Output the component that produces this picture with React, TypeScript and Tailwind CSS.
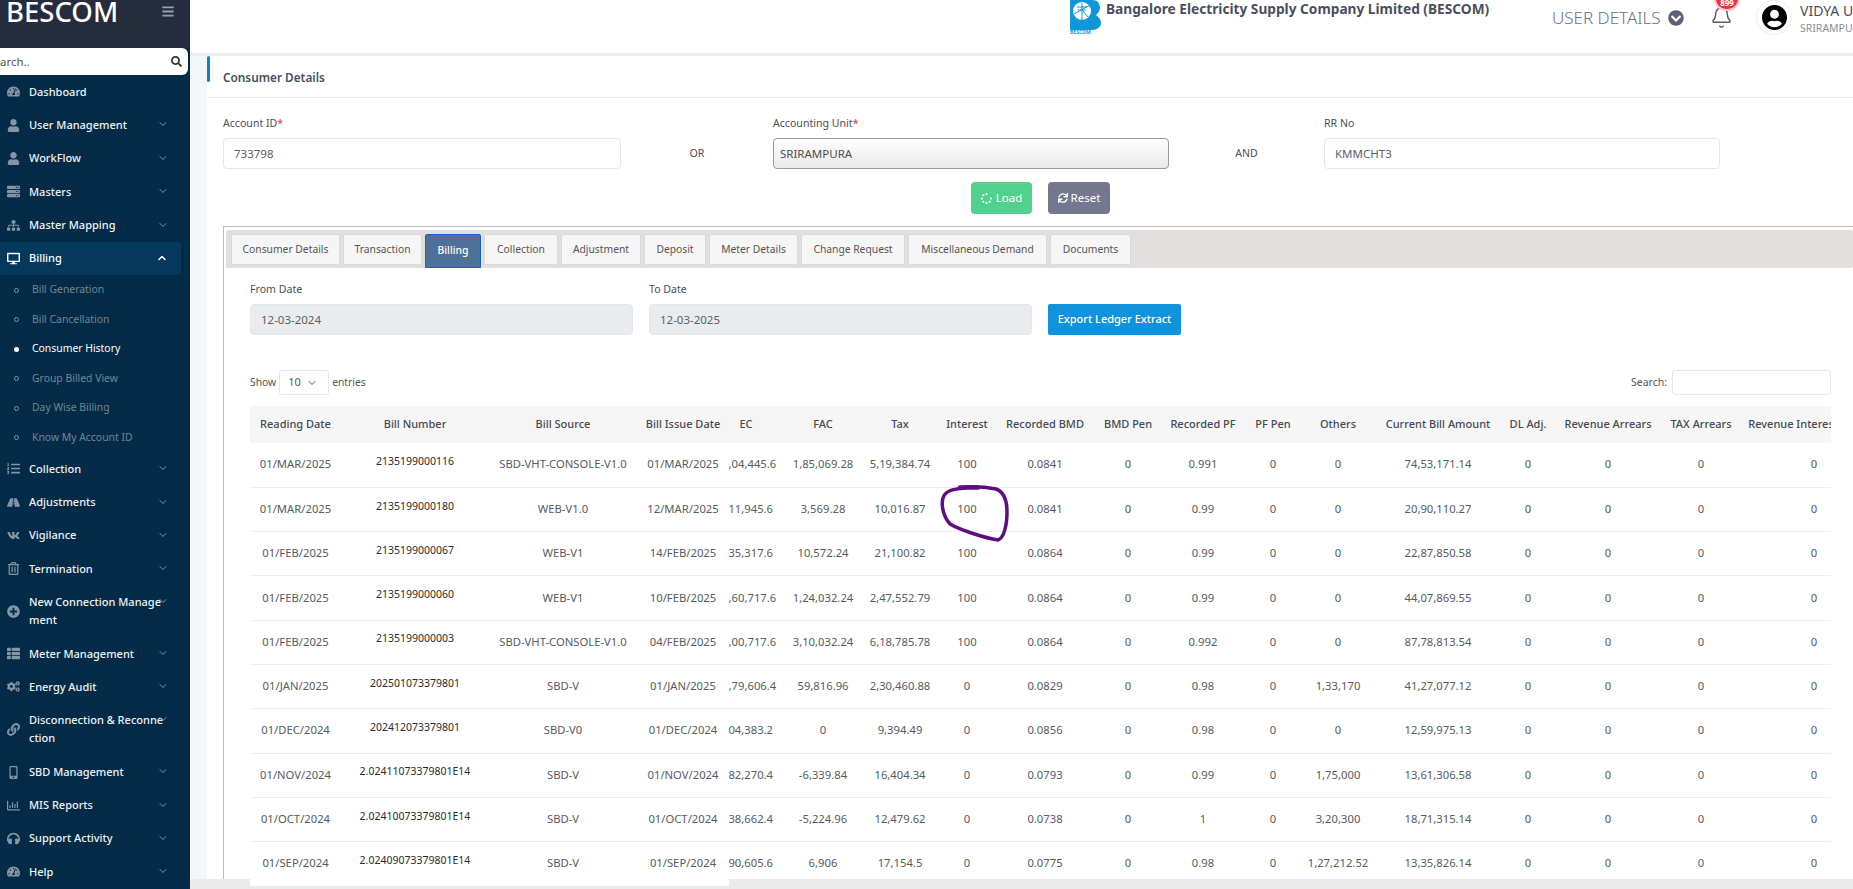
import React from "react";
import { ChevronDown, ChevronUp, Bell } from "lucide-react";
import {
  FaTachometerAlt, FaUser, FaServer, FaSitemap, FaDesktop, FaListOl, FaRoad, FaVk, FaRegTrashAlt,
  FaPlusCircle, FaThList, FaCogs, FaLink, FaMobileAlt, FaRegChartBar, FaHeadphones, FaBars, FaSearch,
  FaSpinner, FaSync, FaChevronCircleDown, FaUserCircle,
} from "react-icons/fa";

type NavItem = { lines: string[]; icon: React.ComponentType<{ className?: string }>; open?: boolean; chevron?: boolean };

const navTop: NavItem[] = [
  { lines: ["Dashboard"], icon: FaTachometerAlt, chevron: false },
  { lines: ["User Management"], icon: FaUser },
  { lines: ["WorkFlow"], icon: FaUser },
  { lines: ["Masters"], icon: FaServer },
  { lines: ["Master Mapping"], icon: FaSitemap },
];
const navBottom: NavItem[] = [
  { lines: ["Collection"], icon: FaListOl },
  { lines: ["Adjustments"], icon: FaRoad },
  { lines: ["Vigilance"], icon: FaVk },
  { lines: ["Termination"], icon: FaRegTrashAlt },
  { lines: ["New Connection Manage", "ment"], icon: FaPlusCircle },
  { lines: ["Meter Management"], icon: FaThList },
  { lines: ["Energy Audit"], icon: FaCogs },
  { lines: ["Disconnection & Reconne", "ction"], icon: FaLink },
  { lines: ["SBD Management"], icon: FaMobileAlt },
  { lines: ["MIS Reports"], icon: FaRegChartBar },
  { lines: ["Support Activity"], icon: FaHeadphones },
  { lines: ["Help"], icon: FaTachometerAlt },
];
const subItems = ["Bill Generation", "Bill Cancellation", "Consumer History", "Group Billed View", "Day Wise Billing", "Know My Account ID"];

function NavRow({ item, rowClass }: { item: NavItem; rowClass: string }) {
  const Icon = item.icon;
  const two = item.lines.length > 1;
  return (
    <div className={`relative flex items-center pl-[7px] text-white ${two ? "h-[52px]" : rowClass}`}>
      <span className="w-[22px] shrink-0"><Icon className="h-[13px] w-[13px] text-[#8496a5]" /></span>
      <span className="whitespace-nowrap text-[11px] font-medium leading-[18px] text-[#eef2f5]">
        {item.lines.map((l) => (<span key={l} className="block">{l}</span>))}
      </span>
      {item.chevron !== false && (
        <ChevronDown className="absolute left-[157px] top-[10px] h-[12px] w-[12px] text-[#8496a5]" />
      )}
    </div>
  );
}

const tabs = [
  { t: "Consumer Details", w: "w-[109px]" },
  { t: "Transaction", w: "w-[79px]" },
  { t: "Billing", w: "w-[56px]", active: true },
  { t: "Collection", w: "w-[74px]" },
  { t: "Adjustment", w: "w-[80px]" },
  { t: "Deposit", w: "w-[62px]" },
  { t: "Meter Details", w: "w-[89px]" },
  { t: "Change Request", w: "w-[104px]" },
  { t: "Miscellaneous Demand", w: "w-[139px]" },
  { t: "Documents", w: "w-[81px]" },
];

const heads = ["Reading Date", "Bill Number", "Bill Source", "Bill Issue Date", "EC", "FAC", "Tax", "Interest", "Recorded BMD", "BMD Pen", "Recorded PF", "PF Pen", "Others", "Current Bill Amount", "DL Adj.", "Revenue Arrears", "TAX Arrears", "Revenue Interest Arrears"];

const rows: string[][] = [
  ["01/MAR/2025", "2135199000116", "SBD-VHT-CONSOLE-V1.0", "01/MAR/2025", "13,04,445.6", "1,85,069.28", "5,19,384.74", "100", "0.0841", "0", "0.991", "0", "0", "74,53,171.14", "0", "0", "0", "0"],
  ["01/MAR/2025", "2135199000180", "WEB-V1.0", "12/MAR/2025", "2,11,945.6", "3,569.28", "10,016.87", "100", "0.0841", "0", "0.99", "0", "0", "20,90,110.27", "0", "0", "0", "0"],
  ["01/FEB/2025", "2135199000067", "WEB-V1", "14/FEB/2025", "2,35,317.6", "10,572.24", "21,100.82", "100", "0.0864", "0", "0.99", "0", "0", "22,87,850.58", "0", "0", "0", "0"],
  ["01/FEB/2025", "2135199000060", "WEB-V1", "10/FEB/2025", "27,60,717.6", "1,24,032.24", "2,47,552.79", "100", "0.0864", "0", "0.99", "0", "0", "44,07,869.55", "0", "0", "0", "0"],
  ["01/FEB/2025", "2135199000003", "SBD-VHT-CONSOLE-V1.0", "04/FEB/2025", "69,00,717.6", "3,10,032.24", "6,18,785.78", "100", "0.0864", "0", "0.992", "0", "0", "87,78,813.54", "0", "0", "0", "0"],
  ["01/JAN/2025", "202501073379801", "SBD-V", "01/JAN/2025", "36,79,606.4", "59,816.96", "2,30,460.88", "0", "0.0829", "0", "0.98", "0", "1,33,170", "41,27,077.12", "0", "0", "0", "0"],
  ["01/DEC/2024", "202412073379801", "SBD-V0", "01/DEC/2024", "8,04,383.2", "0", "9,394.49", "0", "0.0856", "0", "0.98", "0", "0", "12,59,975.13", "0", "0", "0", "0"],
  ["01/NOV/2024", "2.02411073379801E14", "SBD-V", "01/NOV/2024", "8,82,270.4", "-6,339.84", "16,404.34", "0", "0.0793", "0", "0.99", "0", "1,75,000", "13,61,306.58", "0", "0", "0", "0"],
  ["01/OCT/2024", "2.02410073379801E14", "SBD-V", "01/OCT/2024", "9,38,662.4", "-5,224.96", "12,479.62", "0", "0.0738", "0", "1", "0", "3,20,300", "18,71,315.14", "0", "0", "0", "0"],
  ["01/SEP/2024", "2.02409073379801E14", "SBD-V", "01/SEP/2024", "8,90,605.6", "6,906", "17,154.5", "0", "0.0775", "0", "0.98", "0", "1,27,212.52", "13,35,826.14", "0", "0", "0", "0"],
];

const cols = ["w-[91px]", "w-[148px]", "w-[148px]", "w-[92px]", "w-[59px]", "w-[70px]", "w-[84px]", "w-[50px]", "w-[106px]", "w-[60px]", "w-[90px]", "w-[50px]", "w-[80px]", "w-[120px]", "w-[60px]", "w-[100px]", "w-[86px]", "w-[140px]"];

function Label({ children }: { children: React.ReactNode }) {
  return <div className="mb-[7px] h-[16px] text-[10.6px] leading-[16px] text-[#4a4f5a]">{children}</div>;
}

function TextBox({ value, className }: { value: string; className: string }) {
  return (
    <input readOnly value={value} className={`block h-[31px] rounded-[4px] border border-[#e4e6ea] px-[10px] text-[11.5px] text-[#5a5f68] outline-none ${className}`} />
  );
}

export default function App() {
  return (
    <div className="relative flex h-[889px] w-[1853px] overflow-hidden bg-white font-['Noto_Sans',sans-serif]">
      <aside className="h-full w-[190px] shrink-0 overflow-hidden bg-[#032b47]">
        <div className="relative h-[48px] bg-[#252c3d]">
          <div className="pl-[6px] pt-0 text-[27.5px] font-medium leading-[23px] text-white">BESCOM</div>
          <FaBars className="absolute left-[162px] top-[5px] h-[13px] w-[12px] text-[#9aa0ab]" />
        </div>
        <div className="mr-[2px] flex h-[27px] items-center justify-between rounded-r-[6px] bg-white pr-[6px]">
          <span className="text-[11.5px] text-[#555]">arch..</span>
          <FaSearch className="h-[11px] w-[11px] text-[#333]" />
        </div>
        {navTop.map((n) => (<NavRow key={n.lines[0]} item={n} rowClass="h-[33.4px]" />))}
        <div className="relative flex h-[33.4px] w-[181px] items-center rounded-r-[3px] bg-[#04395c] pl-[7px]">
          <span className="w-[22px] shrink-0"><FaDesktop className="h-[13px] w-[13px] text-white" /></span>
          <span className="text-[11px] font-medium text-white">Billing</span>
          <ChevronUp className="absolute left-[156px] top-[10px] h-[12px] w-[12px] text-white" strokeWidth={3} />
        </div>
        {subItems.map((s, i) => (
          <div key={s} className="flex h-[29.5px] items-center pl-[14px]">
            <span className={`mr-[13px] h-[5px] w-[5px] rounded-full ${i === 2 ? "bg-white" : "border border-[#7f95a5]"}`} />
            <span className={`text-[10.4px] ${i === 2 ? "text-white" : "text-[#6f8797]"}`}>{s}</span>
          </div>
        ))}
        {navBottom.map((n) => (<NavRow key={n.lines[0]} item={n} rowClass="h-[33.2px]" />))}
      </aside>

      <main className="flex min-w-0 flex-1 flex-col bg-[#f4f6f9]">
        <header className="flex h-[56px] shrink-0 items-start border-b-[3px] border-[#ecedf2] bg-white pl-[880px]">
          <div className="w-[31px] shrink-0">
            <svg viewBox="0 0 31 30" className="h-[30px] w-[31px]">
              <path d="M0 0H22C29 0 30 5 30 8C30 11 28 13 26 15C29 17 31 20 31 23C31 27 27 30 22 30H0Z" fill="#0d97d8" />
              <circle cx="12" cy="11" r="9" fill="#fff" />
              <path d="M12 3V20M7 7H17M8 10H16M4 14L20 5M12 10L18 17" stroke="#0d97d8" strokeWidth="1" fill="none" />
            </svg>
            <div className="text-[5px] font-bold leading-[5px] text-[#0d97d8]">BESCOM</div>
          </div>
          <div className="ml-[5px] w-[446px] shrink-0 whitespace-nowrap text-[13.7px] font-bold leading-[17px] text-[#4a4f5e]">Bangalore Electricity Supply Company Limited (BESCOM)</div>
          <div className="flex w-[158px] shrink-0 items-center pt-[7px]">
            <span className="w-[116px] whitespace-nowrap text-[17px] font-light leading-[22px] text-[#6c7081]">USER DETAILS</span>
            <FaChevronCircleDown className="h-[16px] w-[16px] text-[#5c6078]" />
          </div>
          <div className="relative w-[46px] shrink-0 pt-[5px]">
            <Bell className="h-[25px] w-[23px] text-[#555b66]" strokeWidth={1.5} />
            <span className="absolute left-[4px] top-[-13px] flex h-[24px] w-[26px] items-end justify-center rounded-full border-2 border-[#ffc9d2] bg-[#f0303f] pb-[2px] text-[8px] font-bold leading-[9px] text-white">899</span>
          </div>
          <div className="flex h-[35px] w-[36px] shrink-0 items-center justify-center rounded-full border border-[#eeeeee]">
            <FaUserCircle className="h-[27px] w-[25px] text-black" />
          </div>
          <div className="ml-[8px] shrink-0 whitespace-nowrap">
            <div className="pt-[3px] text-[14px] leading-[16px] text-[#4a4f5a]">VIDYA U</div>
            <div className="pt-[2px] text-[10.5px] leading-[14px] text-[#8a8fa0]">SRIRAMPU</div>
          </div>
        </header>

        <section className="ml-[17px] flex-1 overflow-hidden bg-white">
          <div className="relative h-[42px] border-b border-[#eeeeee] pl-[16px] pt-[12px]">
            <span className="absolute left-0 top-0 h-[26px] w-[3px] rounded-[2px] bg-[#1b7dbd]" />
            <div className="text-[11.8px] font-semibold leading-[18px] text-[#465060]">Consumer Details</div>
          </div>

          <div className="grid grid-cols-[398px_152px_396px_155px_396px] pl-[16px] pt-[17px]">
            <div>
              <Label>Account ID<span className="text-[#e0344a]">*</span></Label>
              <TextBox value="733798" className="w-full" />
            </div>
            <div className="flex items-center justify-center pt-[24px] text-[10.6px] text-[#4a4f5a]">OR</div>
            <div>
              <Label>Accounting Unit<span className="text-[#e0344a]">*</span></Label>
              <div className="flex h-[31px] items-center rounded-[4px] border border-[#9a9a9a] bg-linear-to-b from-white to-[#e9e9e9] pl-[6px] text-[11.5px] text-[#4f4f55]">SRIRAMPURA</div>
            </div>
            <div className="flex items-center justify-center pt-[24px] text-[10.6px] text-[#4a4f5a]">AND</div>
            <div>
              <Label>RR No</Label>
              <TextBox value="KMMCHT3" className="w-full" />
            </div>
          </div>

          <div className="mt-[13px] flex gap-[16px] pl-[764px]">
            <button className="flex h-[32px] w-[61px] items-center justify-center gap-[4px] rounded-[4px] bg-[#52d18c] text-[11.5px] text-white">
              <FaSpinner className="h-[11px] w-[11px]" />Load
            </button>
            <button className="flex h-[32px] w-[62px] items-center justify-center gap-[3px] rounded-[4px] bg-[#73788e] text-[11.5px] text-white">
              <FaSync className="h-[10px] w-[10px]" />Reset
            </button>
          </div>

          <div className="ml-[16px] mt-[12px] h-[700px] border-l border-t border-[#bbbbbb] pl-[2px] pt-[3px]">
            <div className="flex h-[38px] gap-[3px] rounded-[2px] bg-[#e2e0df] pl-[5px] pt-[4px]">
              {tabs.map((t) => (
                <div
                  key={t.t}
                  className={t.active
                    ? `flex h-[34px] items-center justify-center rounded-t-[2px] border border-[#1a5fd0] bg-[#4d7199] text-[10.4px] font-medium text-white ${t.w}`
                    : `flex h-[31px] items-center justify-center rounded-t-[2px] border border-[#d9d9d9] bg-[#f6f6f6] text-[10.3px] text-[#555] ${t.w}`}
                >
                  {t.t}
                </div>
              ))}
            </div>

            <div className="pl-[24px] pr-[22px] pt-[13px]">
              <div className="flex gap-[16px]">
                <div className="w-[383px]">
                  <Label>From Date</Label>
                  <TextBox value="12-03-2024" className="w-full bg-[#e9ecef]" />
                </div>
                <div className="w-[383px]">
                  <Label>To Date</Label>
                  <TextBox value="12-03-2025" className="w-full bg-[#e9ecef]" />
                </div>
                <button className="mt-[23px] h-[31px] w-[133px] rounded-[2px] bg-[#0e93dc] text-[11px] font-medium text-white">Export Ledger Extract</button>
              </div>

              <div className="mt-[35px] flex h-[25px] items-center justify-between">
                <div className="flex items-center text-[10.3px] text-[#555]">
                  Show
                  <div className="mx-[3px] flex h-[25px] w-[50px] items-center justify-between rounded-[3px] border border-[#e4e6ea] pl-[8px] pr-[10px] text-[11px] text-[#555]">
                    10<ChevronDown className="h-[12px] w-[12px] text-[#555]" />
                  </div>
                  entries
                </div>
                <div className="flex items-center text-[10.5px] text-[#555]">
                  Search:
                  <input readOnly className="ml-[5px] block h-[25px] w-[159px] rounded-[3px] border border-[#e4e6ea] outline-none" />
                </div>
              </div>

              <div className="mt-[11px] w-[1581px] overflow-hidden">
                <table className="w-[1634px] table-fixed border-collapse">
                  <colgroup>
                    {cols.map((c, i) => (<col key={i} className={c} />))}
                  </colgroup>
                  <thead>
                    <tr className="h-[37px] bg-[#f6f6f6]">
                      {heads.map((h, i) => (
                        <th key={h} className="overflow-hidden whitespace-nowrap p-0 text-center text-[11px] font-medium text-[#444a52]">
                          {i === 4 ? <span className="block w-[34px]">{h}</span> : h}
                        </th>
                      ))}
                    </tr>
                  </thead>
                  <tbody>
                    {rows.map((r, ri) => (
                      <tr key={ri} className="h-[44.3px] border-b border-[#eeeeee]">
                        {r.map((c, ci) => (
                          <td
                            key={ci}
                            className={ci === 1
                              ? "whitespace-nowrap p-0 pb-[6px] text-center text-[10.5px] text-[#2b2b2b]"
                              : "overflow-hidden whitespace-nowrap p-0 text-center text-[11.25px] text-[#575b62]"}
                          >
                            {ci === 4 ? <span className="flex w-[34px] justify-center">{c}</span> : c}
                          </td>
                        ))}
                      </tr>
                    ))}
                  </tbody>
                </table>
              </div>
            </div>
          </div>
        </section>
      </main>

      <div className="absolute bottom-0 left-[190px] right-0 h-[10px] bg-[#ebebeb]" />
      <div className="absolute left-[250px] top-[879px] h-[7px] w-[479px] bg-white" />
      <svg className="absolute left-[938px] top-[483px] h-[60px] w-[72px]" viewBox="938 483 72 60">
        <path d="M960 488C970 486 985 487 996 489C1004 492 1007 500 1007 512C1007 525 1004 538 998 540C985 538 960 530 950 524C943 516 941 505 943 498C945 491 952 489 965 488" fill="none" stroke="#5b0f83" strokeWidth="3.5" strokeLinecap="round" />
        <path d="M960 487.5H978" stroke="#5b0f83" strokeWidth="4.5" strokeLinecap="round" />
      </svg>
    </div>
  );
}
